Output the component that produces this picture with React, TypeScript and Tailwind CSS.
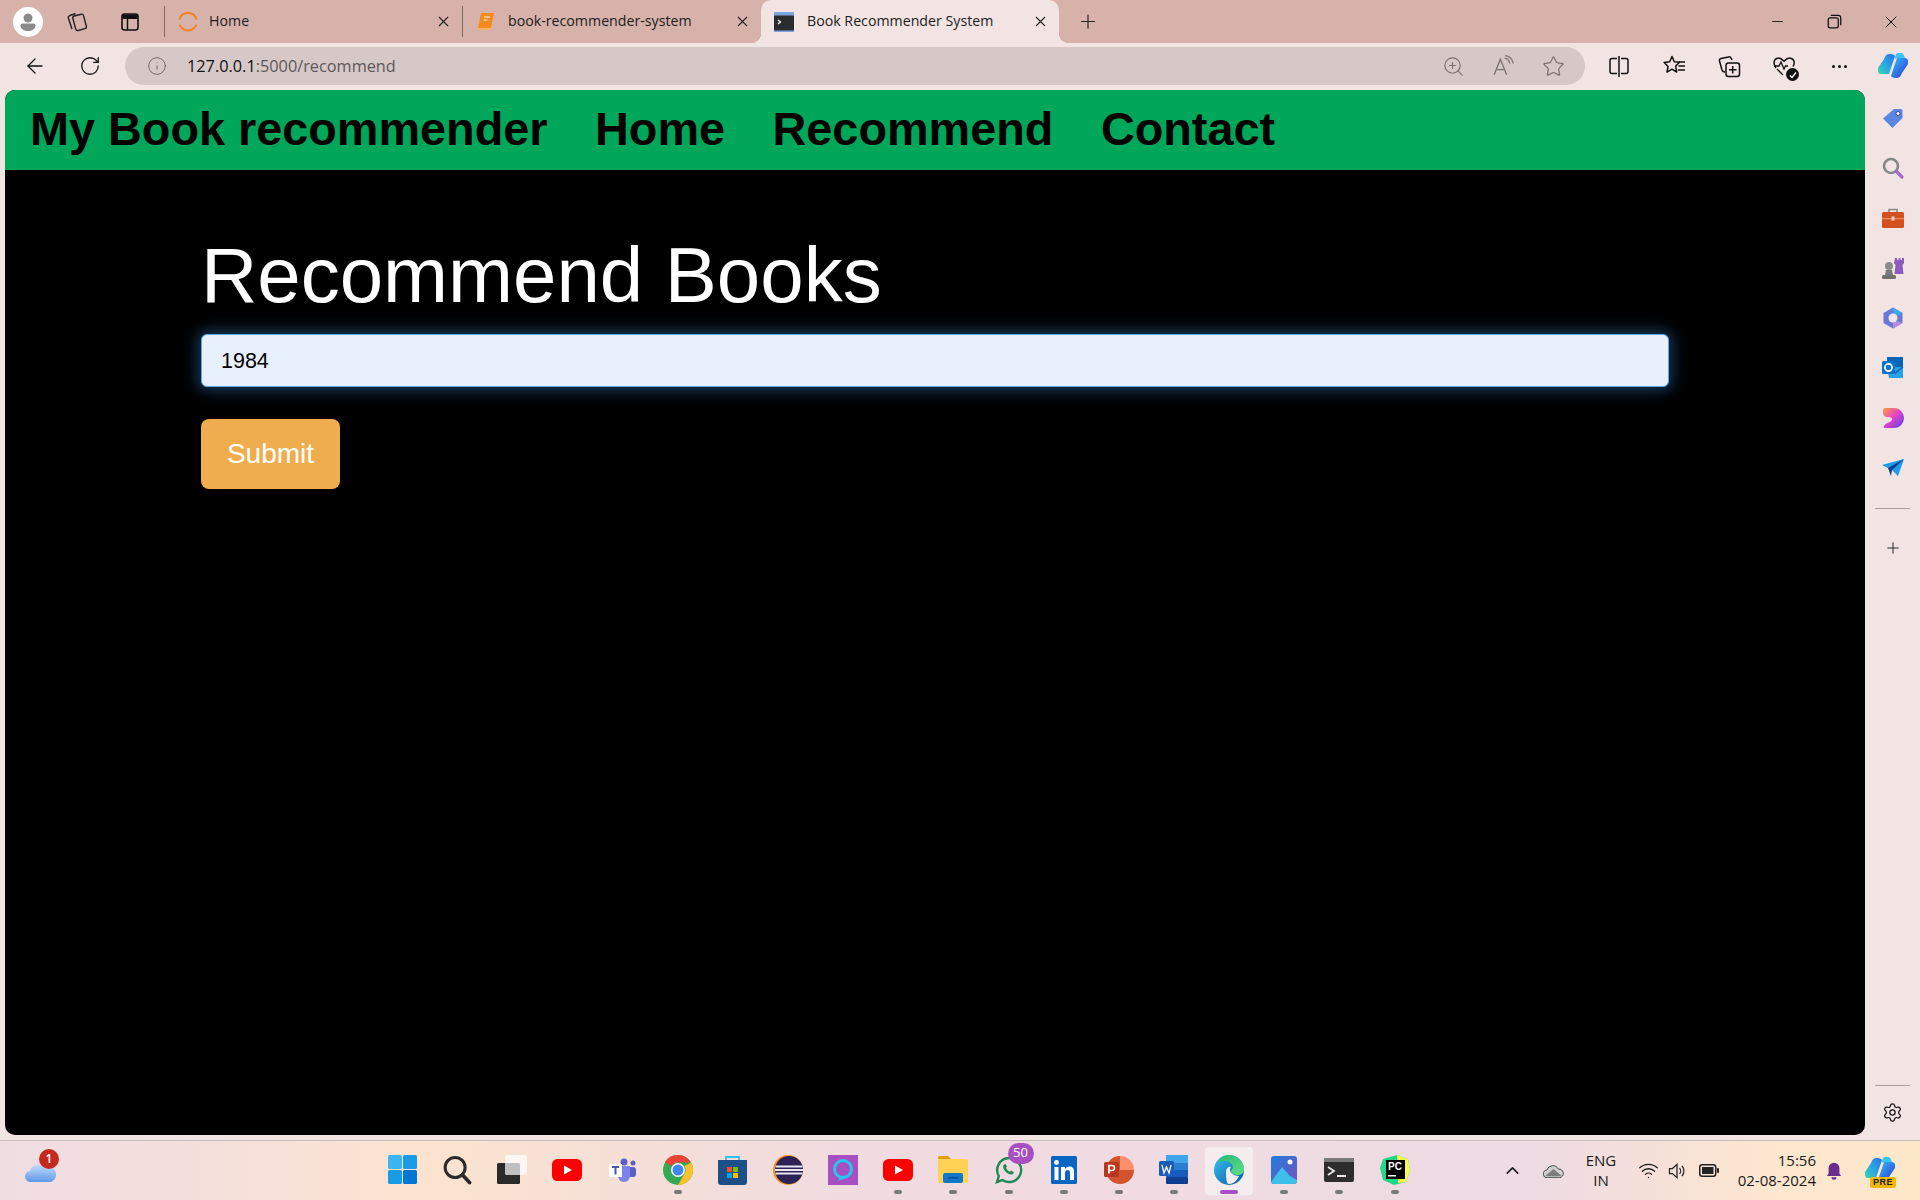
import type { ReactNode } from "react";
import { X, Plus, ArrowLeft, RotateCw, Info, ZoomIn, Star, Settings, ChevronUp, Wifi, Minus } from "lucide-react";

const segoe = "font-['Open_Sans','Noto_Sans',sans-serif]";

function Svg({ size = 24, children, className = "" }: { size?: number; children: ReactNode; className?: string }) {
  return (
    <svg width={size} height={size} viewBox="0 0 24 24" fill="none" className={className}>
      {children}
    </svg>
  );
}

function Tab({ icon, title, width, active, gap }: { icon: ReactNode; title: string; width: string; active?: boolean; gap: string }) {
  return (
    <div className={`${width} relative flex items-center pl-[11px] pr-[10px] ${active ? "h-[43px] rounded-t-[10px] bg-[#f1e4e3]" : "h-full"}`}>
      {active && (
        <>
          <span className="absolute bottom-0 left-[-10px] h-[10px] w-[10px] bg-[radial-gradient(circle_at_0_0,#d7b2aa_10px,#f1e4e3_10.5px)]" />
          <span className="absolute bottom-0 right-[-10px] h-[10px] w-[10px] bg-[radial-gradient(circle_at_100%_0,#d7b2aa_10px,#f1e4e3_10.5px)]" />
        </>
      )}
      <div className="flex w-[24px] shrink-0 justify-center">{icon}</div>
      <span className={`${segoe} ${gap} mb-[2px] flex-1 truncate text-[14.2px] text-[#1c1c1c]`}>{title}</span>
      <X size={17} strokeWidth={1.5} className="text-[#222]" />
    </div>
  );
}

function TabBar() {
  return (
    <div className="flex h-[43px] shrink-0 items-center bg-[#d7b2aa]">
      <div className="ml-[13px] flex h-[30px] w-[30px] items-center justify-center rounded-full bg-white">
        <Svg size={24}>
          <circle cx="12" cy="8" r="4.5" fill="#8a8a8a" />
          <path d="M4.5 15.5c0-1.2 1-2 2-2h11c1 0 2 .8 2 2 0 3.5-3.5 5.5-7.500 5.500S4.500 19 4.500 15.500z" fill="#8a8a8a" />
        </Svg>
      </div>
      <div className="ml-[22px] flex w-[24px] justify-center">
        <Svg size={24}>
          <rect x="9" y="5" width="11" height="15" rx="2" transform="rotate(-15 14 12)" stroke="#222" strokeWidth="1.400" />
          <path d="M7 4.500 4 6a1.500 1.500 0 0 0-.7 1.800L7 19M10.500 3.500 7 5" stroke="#222" strokeWidth="1.400" />
        </Svg>
      </div>
      <div className="ml-[29px] flex w-[24px] justify-center">
        <Svg size={24}>
          <rect x="4" y="4" width="16" height="16" rx="2.500" stroke="#111" strokeWidth="1.600" />
          <path d="M4.500 4.500h15V9h-15z" fill="#111" />
          <path d="M9.500 9v11" stroke="#111" strokeWidth="1.500" />
        </Svg>
      </div>
      <div className="ml-[22px] h-[31px] w-px bg-[#7f6a66]" />
      <Tab
        width="w-[297px]"
        gap="ml-[9px]"
        title="Home"
        icon={
          <svg width="20" height="20" viewBox="0 0 20 20" fill="none">
            <path d="M1.500 7a9 9 0 0 1 17 0M2 13.500a9 9 0 0 0 16 0" stroke="#f58220" strokeWidth="2" strokeLinecap="round" />
          </svg>
        }
      />
      <div className="h-[31px] w-px bg-[#7f6a66]" />
      <Tab
        width="w-[298px]"
        gap="ml-[10px]"
        title="book-recommender-system"
        icon={
          <svg width="18" height="19" viewBox="0 0 18 19">
            <path d="M4 1h13l-3 15H1z" fill="#f58a1f" />
            <path d="M1 16c0 1 .6 2 2 2h10l.8-2z" fill="#fbb36b" />
            <path d="M7 5h6M6.500 8h4" stroke="#fff" strokeWidth="1" />
          </svg>
        }
      />
      <Tab
        width="w-[298px]"
        gap="ml-[11px]"
        active
        title="Book Recommender System"
        icon={
          <svg width="20" height="20" viewBox="0 0 20 20">
            <rect width="20" height="20" fill="#2a2d30" />
            <rect width="20" height="3.500" fill="#7ea6dd" />
            <rect x="0" y="18.500" width="20" height="1.500" fill="#7ea6dd" />
            <path d="M4 8l2.500 2L4 12" stroke="#fff" strokeWidth="1.200" fill="none" />
          </svg>
        }
      />
      <div className="ml-[18px] flex w-[22px] justify-center">
        <Plus size={23} strokeWidth={1.300} className="text-[#222]" />
      </div>
      <div className="ml-auto flex h-full items-center">
        <div className="flex w-[57px] justify-center">
          <Minus size={17} strokeWidth={1.200} className="text-[#111]" />
        </div>
        <div className="flex w-[57px] justify-center">
          <Svg size={15}>
            <rect x="2" y="6" width="16" height="16" rx="3" stroke="#111" strokeWidth="2" />
            <path d="M6 2h12a4 4 0 0 1 4 4v12" stroke="#111" strokeWidth="2" />
          </Svg>
        </div>
        <div className="flex w-[57px] justify-center pr-[2px]">
          <X size={20} strokeWidth={1.200} className="text-[#111]" />
        </div>
      </div>
    </div>
  );
}

function Toolbar() {
  return (
    <div className="flex h-[47px] shrink-0 items-center bg-[#f1e4e3] pb-[1px]">
      <div className="ml-[23px] flex w-[24px] justify-center">
        <ArrowLeft size={24} strokeWidth={1.300} className="text-[#111]" />
      </div>
      <div className="ml-[31px] flex w-[24px] justify-center">
        <RotateCw size={22} strokeWidth={1.400} className="text-[#111]" />
      </div>
      <div className="ml-[23px] flex h-[38px] w-[1460px] items-center rounded-full bg-[#d5c8c7] pl-[22px]">
        <Info size={20} strokeWidth={1.100} className="text-[#6b6362]" />
        <span className={`${segoe} ml-[20px] text-[16.3px] text-[#5e5857]`}>
          <span className="text-[#111]">127.0.0.1</span>:5000/recommend
        </span>
        <div className="ml-auto flex items-center gap-[26px] pr-[20px] text-[#7b7372]">
          <ZoomIn size={23} strokeWidth={1.200} />
          <Svg size={25}>
            <path d="M3 20 9 5l6 15M5.500 15h7" stroke="#7b7372" strokeWidth="1.300" />
            <path d="M13 4c3 .5 4.500 2.500 5 5M13.500 1.500c4 .5 7 3.500 8 7.500" stroke="#7b7372" strokeWidth="1.300" />
          </Svg>
          <Star size={23} strokeWidth={1.300} />
        </div>
      </div>
      <div className="ml-[22px] flex items-center gap-[31px]">
        <Svg size={24}>
          <path d="M10 4.500H5a2 2 0 0 0-2 2v11a2 2 0 0 0 2 2h5M14 4.500h5a2 2 0 0 1 2 2v11a2 2 0 0 1-2 2h-5M12 2v21" stroke="#111" strokeWidth="1.500" />
        </Svg>
        <Svg size={24}>
          <path d="M10 2.500l2.300 5.200 5.200.6-3.800 3.700 1 6-4.700-2.800-5 3 1-5.700L2.200 8.400l5.500-.7z" stroke="#111" strokeWidth="1.500" strokeLinejoin="round" />
          <path d="M17 8h6M16.500 12h6.500M16 16h7" stroke="#111" strokeWidth="1.400" />
        </Svg>
        <Svg size={24}>
          <rect x="9" y="9" width="13.500" height="13.500" rx="2.500" stroke="#111" strokeWidth="1.500" />
          <path d="M15.700 12v7.500M12 15.700h7.500" stroke="#111" strokeWidth="1.500" />
          <path d="M15 6l-1-2a2 2 0 0 0-2.500-1L4 4.500A2 2 0 0 0 2.500 7l2.500 9c.5 1.500 1.500 2 3 2" stroke="#111" strokeWidth="1.500" />
        </Svg>
        <div className="relative h-[24px] w-[24px]">
          <Svg size={24}>
            <path d="M4 14C1 10 1.500 5 5.500 4.200c2.500-.5 4.500 1 6.500 3 2-2 4-3.500 6.500-3C22.500 5 23 9 21 12.500" stroke="#111" strokeWidth="1.500" />
            <path d="M2 12h5l2-4 3 7 1.500-3H16M5 15l6 6" stroke="#111" strokeWidth="1.300" />
          </Svg>
          <div className="absolute bottom-[-3px] right-[-3px] flex h-[13px] w-[13px] items-center justify-center rounded-full bg-[#111]">
            <svg width="8" height="8" viewBox="0 0 8 8">
              <path d="M1 4.500 3 6.500 7 1.500" stroke="#fff" strokeWidth="1.300" fill="none" />
            </svg>
          </div>
        </div>
        <div className="flex w-[24px] items-center justify-center gap-[3px]">
          <span className="h-[3px] w-[3px] rounded-full bg-[#111]" />
          <span className="h-[3px] w-[3px] rounded-full bg-[#111]" />
          <span className="h-[3px] w-[3px] rounded-full bg-[#111]" />
        </div>
        <div className="ml-[-4px]">
          <Copilot id="top" size={30} />
        </div>
      </div>
    </div>
  );
}

function Copilot({ id, size }: { id: string; size: number }) {
  return (
    <svg width={size} height={size} viewBox="0 0 30 30">
      <defs>
        <linearGradient id={`cp-a-${id}`} x1="0" y1="1" x2="1" y2="0">
          <stop offset="0" stopColor="#3ed6a4" />
          <stop offset="0.500" stopColor="#27a5e8" />
          <stop offset="1" stopColor="#2f6fe0" />
        </linearGradient>
        <linearGradient id={`cp-b-${id}`} x1="0" y1="0" x2="1" y2="1">
          <stop offset="0" stopColor="#35c1f1" />
          <stop offset="0.600" stopColor="#2f6ae6" />
          <stop offset="1" stopColor="#1c3fc4" />
        </linearGradient>
      </defs>
      <path d="M11 3c-3 0-4 3-5 5L0 17c-1 3 .5 6 3 6h8l6-18c-1-1.500-3-2-6-2z" fill={`url(#cp-a-${id})`} />
      <path d="M19 27c3 0 4-3 5-5l6-9c1-3-.5-6-3-6h-8l-6 18c1 1.500 3 2 6 2z" fill={`url(#cp-b-${id})`} />
      <path d="M20 2h3c2 0 3 2 4 5l-8 0-2 1c0-3 1-6 3-6z" fill="#37c6f4" />
    </svg>
  );
}

function PageContent() {
  return (
    <main className="ml-[5px] flex w-[1860px] flex-1 flex-col overflow-hidden rounded-[10px] bg-black font-['Liberation_Sans',Arial,sans-serif]">
      <nav className="flex h-[80px] shrink-0 items-center gap-[47.5px] bg-[#00a65a] pb-[2px] pl-[25px] text-[46.8px] font-bold text-black">
        <a>My Book recommender</a>
        <a>Home</a>
        <a>Recommend</a>
        <a>Contact</a>
      </nav>
      <div className="pl-[196px] pr-[196px]">
        <h1 className="mt-[55px] text-[78px] leading-[100px] text-white">Recommend Books</h1>
        <div className="mt-[9px] flex h-[53px] items-center rounded-[6px] border border-[#5aa6e8] bg-[#e8f0fe] pl-[19px] pt-[1px] text-[21.5px] text-black shadow-[0_0_14px_4px_rgba(60,150,240,0.36)]">
          1984
        </div>
        <button className="mt-[32px] h-[70px] w-[139px] rounded-[8px] bg-[#f0ad4e] text-[28px] text-white">Submit</button>
      </div>
    </main>
  );
}

function SideIcon({ children }: { children: ReactNode }) {
  return <div className="flex h-[50px] items-center justify-center">{children}</div>;
}

function Sidebar() {
  return (
    <aside className="flex w-[55px] flex-col items-center pt-[3px]">
      <SideIcon>
        <Svg size={24}>
          <path d="M13 3h7a1.500 1.500 0 0 1 1.500 1.500V12L11.500 22 2 12.500z" fill="#5c85e0" />
          <circle cx="17" cy="7.500" r="2" fill="#fff" stroke="#33489c" strokeWidth="1" />
        </Svg>
      </SideIcon>
      <SideIcon>
        <Svg size={24}>
          <circle cx="10" cy="10" r="7" stroke="#868686" strokeWidth="2.600" />
          <path d="M15.500 15.500 21 21" stroke="#a06ccc" strokeWidth="3.200" strokeLinecap="round" />
        </Svg>
      </SideIcon>
      <SideIcon>
        <Svg size={24}>
          <path d="M8 6V3.500h8V6" stroke="#888" strokeWidth="1.500" />
          <rect x="1" y="6" width="22" height="16" rx="1.500" fill="#d4501f" />
          <rect x="1" y="12" width="22" height="1.200" fill="#f08a55" />
          <rect x="10.500" y="10.500" width="3" height="4" fill="#d9d4d0" />
        </Svg>
      </SideIcon>
      <SideIcon>
        <Svg size={24}>
          <circle cx="8" cy="10" r="4" fill="#8b8b8b" />
          <path d="M5 14h6l1 5H4z" fill="#7a7a7a" />
          <rect x="1" y="19" width="14" height="4" rx="1.500" fill="#6f6f6f" />
          <path d="M14 2h2v2h1.500V2h2v2H21V2h2v5l-1.500 2 1 9H13.500l1-9L13 7z" fill="#8a5cc0" />
        </Svg>
      </SideIcon>
      <SideIcon>
        <Svg size={24}>
          <path d="M12 1.500 21.500 7v10L12 22.500 2.500 17V7z" fill="#6a78d8" />
          <path d="M12 1.500 21.500 7l-5 3L12 7.500z" fill="#3fa6e8" />
          <path d="M21.500 17 12 22.500V17l4.500-2z" fill="#b38ae0" />
          <circle cx="12" cy="12" r="4.500" fill="#f1e4e3" />
        </Svg>
      </SideIcon>
      <SideIcon>
        <Svg size={24}>
          <rect x="6" y="1" width="16" height="10" fill="#0a64b8" />
          <path d="M6 11h16v11H8z" fill="#2aa0e6" />
          <path d="M22 11 14 17l-8-6" stroke="#0a64b8" strokeWidth="1.500" />
          <rect x="1" y="5" width="13" height="13" rx="1.500" fill="#0672c8" />
          <circle cx="7.500" cy="11.500" r="3.600" stroke="#fff" strokeWidth="1.700" />
        </Svg>
      </SideIcon>
      <SideIcon>
        <svg width="24" height="24" viewBox="0 0 24 24">
          <defs>
            <linearGradient id="side-d" x1="0" y1="0" x2="1" y2="1">
              <stop offset="0" stopColor="#ff9d3c" />
              <stop offset="0.500" stopColor="#e23fd0" />
              <stop offset="1" stopColor="#4a48e0" />
            </linearGradient>
          </defs>
          <path d="M4 2h9c6 0 10 5 10 10s-4 10-10 10H3c-1 0 0-1 0-2 2-4 6-3 8-6 1-2-1-3-4-3-3 0-5-1-5-5 0-2 0-4 2-4z" fill="url(#side-d)" />
        </svg>
      </SideIcon>
      <SideIcon>
        <Svg size={24}>
          <path d="M1 9 23 3l-6 17-6-6z" fill="#1e9be8" />
          <path d="M7 12 23 3 11 14l-1 6z" fill="#0b3c8c" />
        </Svg>
      </SideIcon>
      <div className="mt-[15px] h-px w-[35px] bg-[#a9a1a0]" />
      <div className="mt-[30px]">
        <Plus size={18} strokeWidth={1.300} className="text-[#222]" />
      </div>
      <div className="mt-auto h-px w-[35px] bg-[#a9a1a0]" />
      <div className="mb-[12px] mt-[16px]">
        <Settings size={21} strokeWidth={1.400} className="text-[#111]" />
      </div>
    </aside>
  );
}

function TaskIcon({ children, dot, active }: { children: ReactNode; dot?: boolean; active?: boolean }) {
  return (
    <div className={`relative flex h-[48px] w-[48px] items-center justify-center rounded-[4px] pb-[2px] ${active ? "bg-[#f5ecee]" : ""}`}>
      {children}
      {dot && <span className="absolute bottom-[1px] h-[4px] w-[8px] rounded-full bg-[#7c7878]" />}
      {active && <span className="absolute bottom-[1px] h-[4px] w-[18px] rounded-full bg-[#a94fc4]" />}
    </div>
  );
}

function TaskIcons() {
  return (
    <div className="flex items-center gap-[7.15px]">
      <TaskIcon>
        <svg width="29" height="29" viewBox="0 0 29 29">
          <rect width="14" height="14" rx="1.500" fill="#3bb6f0" />
          <rect x="15" width="14" height="14" rx="1.500" fill="#1a9be6" />
          <rect y="15" width="14" height="14" rx="1.500" fill="#1a9be6" />
          <rect x="15" y="15" width="14" height="14" rx="1.500" fill="#0078d4" />
        </svg>
      </TaskIcon>
      <TaskIcon>
        <Svg size={30}>
          <circle cx="10.500" cy="10" r="8" stroke="#2b2b2b" strokeWidth="2.400" />
          <path d="M16.500 16 22 22" stroke="#2b2b2b" strokeWidth="3" strokeLinecap="round" />
        </Svg>
      </TaskIcon>
      <TaskIcon>
        <svg width="30" height="29" viewBox="0 0 30 29">
          <rect x="0" y="8" width="23" height="21" rx="1.500" fill="#2a2a2a" />
          <rect x="8" y="0" width="22" height="20" rx="1.500" fill="#fff" fillOpacity="0.700" />
        </svg>
      </TaskIcon>
      <TaskIcon>
        <YouTube />
      </TaskIcon>
      <TaskIcon>
        <svg width="28" height="24" viewBox="0 0 28 24">
          <circle cx="15" cy="4" r="3.500" fill="#5b5fc7" />
          <circle cx="24" cy="5" r="2.500" fill="#5b5fc7" />
          <rect x="19" y="9" width="8" height="10" rx="3" fill="#5b5fc7" />
          <path d="M9 8h12v10a6 6 0 0 1-12 0z" fill="#7b83eb" />
          <rect y="6" width="13" height="13" fill="#fff" />
          <path d="M3 9h7M6.500 9v7.500" stroke="#4b53bc" strokeWidth="2" />
        </svg>
      </TaskIcon>
      <TaskIcon dot>
        <svg width="30" height="30" viewBox="0 0 30 30">
          <circle cx="15" cy="15" r="15" fill="#34a853" />
          <path d="M15 0a15 15 0 0 1 13 7.500H15a7.500 7.500 0 0 0-6.500 3.700L2 7a15 15 0 0 1 13-7z" fill="#ea4335" />
          <path d="M28 7.500a15 15 0 0 1-13 22.500l6.500-11.200A7.500 7.500 0 0 0 21.500 11z" fill="#fbc02d" />
          <circle cx="15" cy="15" r="7" fill="#fff" />
          <circle cx="15" cy="15" r="5.500" fill="#4285f4" />
        </svg>
      </TaskIcon>
      <TaskIcon>
        <svg width="29" height="30" viewBox="0 0 29 30">
          <path d="M8 6V2h13v4" stroke="#2fc0f0" strokeWidth="1.800" fill="none" />
          <path d="M0 5h29v22a3 3 0 0 1-3 3H3a3 3 0 0 1-3-3z" fill="#1c4f86" />
          <rect x="9" y="12" width="5" height="5" fill="#f25022" />
          <rect x="15" y="12" width="5" height="5" fill="#7fba00" />
          <rect x="9" y="18" width="5" height="5" fill="#00a4ef" />
          <rect x="15" y="18" width="5" height="5" fill="#ffb900" />
        </svg>
      </TaskIcon>
      <TaskIcon>
        <svg width="30" height="30" viewBox="0 0 30 30">
          <circle cx="15" cy="15" r="15" fill="#f7941e" />
          <circle cx="16" cy="15" r="14" fill="#2c2255" />
          <path d="M2.500 11.500h27M2 15h28M2.500 18.500h27" stroke="#e8e6f2" strokeWidth="2" />
        </svg>
      </TaskIcon>
      <TaskIcon>
        <svg width="30" height="30" viewBox="0 0 30 30">
          <rect width="30" height="30" fill="#a94fc4" />
          <circle cx="15" cy="14" r="8.500" stroke="#27c6ee" strokeWidth="3" fill="none" />
          <path d="M12 23 9 26l7-2z" fill="#27c6ee" />
        </svg>
      </TaskIcon>
      <TaskIcon dot>
        <YouTube />
      </TaskIcon>
      <TaskIcon dot>
        <svg width="30" height="27" viewBox="0 0 30 27">
          <path d="M0 2a2 2 0 0 1 2-2h8l3 3H0z" fill="#e0a100" />
          <rect y="3" width="30" height="24" rx="1.500" fill="#ffd256" />
          <rect x="5" y="17" width="20" height="10" rx="2" fill="#0f78c8" />
          <rect x="10" y="21" width="10" height="1.500" fill="#0a4d8a" />
        </svg>
      </TaskIcon>
      <TaskIcon dot>
        <div className="relative">
          <svg width="30" height="30" viewBox="0 0 30 30">
            <path d="M15 3a12 12 0 1 1-6.500 22L3 27l1.800-6A12 12 0 0 1 15 3z" stroke="#1e8a55" strokeWidth="2.400" fill="none" />
            <path d="M10 9.500c-1.500 1.500-1 4 1 6.500s5 4 7 3.500c1.500-.5 2-2 1.500-2.500l-2.500-1.500-1 1.200c-1.500-.4-3.200-2-4-4l1-1.200L11.500 9z" fill="#1e8a55" />
          </svg>
          <span className="absolute right-[-10px] top-[-12px] flex h-[21px] w-[26px] items-center justify-center rounded-full bg-[#a94fc4] font-['Open_Sans',sans-serif] text-[13px] text-white">
            50
          </span>
        </div>
      </TaskIcon>
      <TaskIcon dot>
        <svg width="26" height="28" viewBox="0 0 26 28">
          <rect width="26" height="28" rx="1.500" fill="#0a66c2" />
          <rect x="3.500" y="11" width="4" height="13" fill="#fff" />
          <circle cx="5.500" cy="6.500" r="2.400" fill="#fff" />
          <path d="M10 11h4v2c1-1.500 2.500-2.400 4.500-2.400 3.500 0 4.500 2.400 4.500 5.400v8h-4v-7c0-1.800-.5-3-2-3s-3 1-3 3.200V24h-4z" fill="#fff" />
        </svg>
      </TaskIcon>
      <TaskIcon dot>
        <svg width="30" height="30" viewBox="0 0 30 30">
          <path d="M16 1a14 14 0 0 1 14 14H16z" fill="#ff8f6b" />
          <path d="M30 15a14 14 0 1 1-14-14v14z" fill="#d35230" />
          <rect y="7" width="15" height="15" rx="1.500" fill="#b7381d" />
          <path d="M5 18.500V10.500h3a2.500 2.500 0 0 1 0 5H5" stroke="#fff" strokeWidth="1.700" fill="none" />
        </svg>
      </TaskIcon>
      <TaskIcon dot>
        <svg width="29" height="29" viewBox="0 0 29 29">
          <rect x="7" width="22" height="8" fill="#41a5ee" />
          <rect x="7" y="8" width="22" height="7" fill="#2b7cd3" />
          <rect x="7" y="15" width="22" height="7" fill="#185abd" />
          <rect x="7" y="22" width="22" height="7" rx="1" fill="#103f91" />
          <rect y="6" width="15" height="15" rx="1.500" fill="#1a5cb8" />
          <path d="M3 10l2 8 2.500-6 2.500 6 2-8" stroke="#fff" strokeWidth="1.300" fill="none" />
        </svg>
      </TaskIcon>
      <TaskIcon active>
        <svg width="30" height="30" viewBox="0 0 30 30">
          <defs>
            <linearGradient id="edge-a" x1="0" y1="0" x2="1" y2="1">
              <stop offset="0" stopColor="#35c1f1" />
              <stop offset="1" stopColor="#0c59a4" />
            </linearGradient>
            <linearGradient id="edge-b" x1="0" y1="0" x2="1" y2="1">
              <stop offset="0" stopColor="#2bb673" />
              <stop offset="1" stopColor="#5fe08a" />
            </linearGradient>
          </defs>
          <circle cx="15" cy="15" r="15" fill="url(#edge-a)" />
          <path d="M3 9C6 3 10 0 15 0c8 0 15 6 15 14 0 4-3 6-6 6-4 0-7-1-7-4 0-1 2-2 2-4 0-3-4-6-8-6-4 0-7 1-8 3z" fill="url(#edge-b)" />
          <path d="M12 17c0-4 3-6 5-5-1 1-1 2-1 3 0 3 4 6 9 6-2 5-6 8-10 8-3 0-3-8-3-12z" fill="#f5ecee" />
        </svg>
      </TaskIcon>
      <TaskIcon dot>
        <svg width="26" height="28" viewBox="0 0 26 28">
          <defs>
            <linearGradient id="photos-a" x1="0" y1="0" x2="1" y2="1">
              <stop offset="0" stopColor="#1c7fdc" />
              <stop offset="1" stopColor="#7a4fc0" />
            </linearGradient>
          </defs>
          <rect width="26" height="28" rx="3" fill="url(#photos-a)" />
          <circle cx="19" cy="6" r="2.500" fill="#fff" />
          <path d="M0 26 11 11l8 9 7 4v1a3 3 0 0 1-3 3H3a3 3 0 0 1-3-2z" fill="#3cc0ea" />
        </svg>
      </TaskIcon>
      <TaskIcon dot>
        <svg width="30" height="24" viewBox="0 0 30 24">
          <rect width="30" height="24" rx="2" fill="#2d2d2d" />
          <rect width="30" height="4" fill="#7a7a7a" />
          <path d="M4 9l6 4-6 4" stroke="#e8e8e8" strokeWidth="1.800" fill="none" />
          <rect x="13" y="17" width="9" height="2" fill="#e8e8e8" />
        </svg>
      </TaskIcon>
      <TaskIcon dot>
        <svg width="30" height="30" viewBox="0 0 30 30">
          <path d="M3 4 17 0l11 4 2 11-4 12-12 3-11-5L0 13z" fill="#21d789" />
          <path d="M17 0l11 4 2 11-4 12-8 1z" fill="#fcf84a" />
          <rect x="6" y="5" width="19" height="19" fill="#000" />
          <rect x="8" y="20" width="8" height="1.500" fill="#fff" />
          <text x="8" y="15" fontSize="10" fontWeight="700" fill="#fff" fontFamily="Liberation Sans">PC</text>
        </svg>
      </TaskIcon>
    </div>
  );
}

function YouTube() {
  return (
    <svg width="30" height="22" viewBox="0 0 30 22">
      <rect width="30" height="22" rx="5.500" fill="#f00" />
      <path d="M12 6.500 20 11l-8 4.500z" fill="#fff" />
    </svg>
  );
}

function Tray() {
  return (
    <div className={`${segoe} flex items-center text-[#1a1a1a]`}>
      <ChevronUp size={21} strokeWidth={1.800} />
      <svg width="21" height="14" viewBox="0 0 22 14" className="ml-[20px]">
        <path d="M5 14a4 4 0 0 1-1-8 6.500 6.500 0 0 1 12-1 4.500 4.500 0 0 1 1.500 9z" fill="#cfcfcf" stroke="#444" strokeWidth="1" />
        <path d="M2 12.500 11 5l9 7.500z" fill="#7d7d7d" />
      </svg>
      <div className="mb-[2px] ml-[17px] flex w-[40px] flex-col items-center text-[15px] leading-[20px]">
        <span>ENG</span>
        <span>IN</span>
      </div>
      <Wifi size={21} strokeWidth={1.500} className="ml-[17px]" />
      <Svg size={20} className="ml-[8px]">
        <path d="M3 9v6h3.500L12 20V4L6.500 9z" stroke="#222" strokeWidth="1.500" />
        <path d="M15 8.500a5 5 0 0 1 0 7M18 6a9 9 0 0 1 0 12" stroke="#222" strokeWidth="1.500" />
      </Svg>
      <svg width="20" height="13" viewBox="0 0 20 13" className="ml-[12px]">
        <rect x="0.750" y="0.750" width="16" height="11.500" rx="2.500" stroke="#222" strokeWidth="1.500" fill="none" />
        <rect x="3" y="3" width="11.500" height="7" fill="#222" />
        <rect x="18" y="4" width="2" height="5" rx="1" fill="#222" />
      </svg>
      <div className="mb-[2px] ml-[11px] flex w-[86px] flex-col items-end text-[15px] leading-[20px]">
        <span>15:56</span>
        <span>02-08-2024</span>
      </div>
      <Svg size={20} className="ml-[8px]">
        <path d="M12 2a6.500 6.500 0 0 1 6.500 6.500V15l2 3h-17l2-3V8.500A6.500 6.500 0 0 1 12 2z" fill="#6b2a90" />
        <path d="M9 19.500a3 3 0 0 0 6 0z" fill="#6b2a90" />
      </Svg>
      <div className="relative ml-[21px] h-[32px] w-[30px]">
        <Copilot id="tray" size={30} />
        <span className="absolute bottom-[-1px] right-[-1px] rounded-[2px] bg-[#f2b705] px-[3px] font-['Liberation_Sans',sans-serif] text-[9px] font-bold leading-[11px] tracking-[0.5px] text-[#222]">
          PRE
        </span>
      </div>
    </div>
  );
}

function Taskbar() {
  return (
    <footer className="flex h-[60px] shrink-0 items-center border-t border-[#c8bcbc] bg-[linear-gradient(90deg,#f0dde3_0%,#f6e0da_12%,#fbe3cf_22%,#f0dbe0_45%,#eedbe3_80%,#fce6cf_92%,#fde7c9_100%)]">
      <div className="relative mb-[8px] ml-[25px] h-[34px] w-[34px]">
        <svg width="32" height="22" viewBox="0 0 32 22" className="absolute bottom-0 left-0">
          <defs>
            <linearGradient id="weather" x1="0" y1="0" x2="0" y2="1">
              <stop offset="0" stopColor="#c3dcfa" />
              <stop offset="1" stopColor="#5f9be8" />
            </linearGradient>
          </defs>
          <path d="M6 20a5.500 5.500 0 0 1-1-11A9 9 0 0 1 20 5a7 7 0 0 1 6 15z" fill="url(#weather)" />
        </svg>
        <span className="absolute right-0 top-[-1px] flex h-[20px] w-[20px] items-center justify-center rounded-full bg-[#c5281c] font-['Open_Sans',sans-serif] text-[12px] font-semibold text-white">
          1
        </span>
      </div>
      <div className="ml-[319px]">
        <TaskIcons />
      </div>
      <div className="ml-auto pr-[25px]">
        <Tray />
      </div>
    </footer>
  );
}

export default function App() {
  return (
    <div className="flex h-[1200px] w-[1920px] flex-col overflow-hidden bg-[#f1e4e3]">
      <TabBar />
      <Toolbar />
      <div className="flex min-h-0 flex-1 pb-[5px]">
        <PageContent />
        <Sidebar />
      </div>
      <Taskbar />
    </div>
  );
}
